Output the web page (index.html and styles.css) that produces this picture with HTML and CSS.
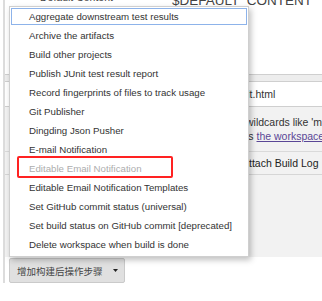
FILE: index.html
```html
<!DOCTYPE html>
<html lang="en">
<head>
    <meta charset="UTF-8">
    <title>Post-build Actions</title>
    <link rel="stylesheet" href="styles.css">
</head>
<body>

<div class="section">
    <div class="config">
        <div class="head-row">
            <span class="head-label">Default Content</span>
            <span class="head-value">$DEFAULT_CONTENT</span>
        </div>
        <div class="blank"></div>
        <div class="bar"></div>
        <div class="field-row">
            <span class="field-text">default.html</span>
        </div>
        <div class="panel">
            <div class="help">
                <div class="help-line">wildcards like 'module/dist/**/*.zip'</div>
                <div class="help-line">is <a href="#">the workspace</a>.</div>
            </div>
            <div class="check-row">Attach Build Log</div>
        </div>
    </div>

    <div class="actions">
        <button class="add-btn">增加构建后操作步骤 <svg class="caret" width="5" height="3" viewBox="0 0 5 3"><polygon points="0,0 5,0 2.5,3" fill="#222"/></svg></button>
    </div>

    <!-- dropdown menu of the add button, open over the form -->
    <ul class="menu">
        <li class="item focus">Aggregate downstream test results</li>
        <li class="item">Archive the artifacts</li>
        <li class="item">Build other projects</li>
        <li class="item">Publish JUnit test result report</li>
        <li class="item">Record fingerprints of files to track usage</li>
        <li class="item">Git Publisher</li>
        <li class="item">Dingding Json Pusher</li>
        <li class="item">E-mail Notification</li>
        <li class="item disabled">Editable Email Notification</li>
        <li class="item">Editable Email Notification Templates</li>
        <li class="item">Set GitHub commit status (universal)</li>
        <li class="item">Set build status on GitHub commit [deprecated]</li>
        <li class="item">Delete workspace when build is done</li>
    </ul>

    <div class="mark"></div>
</div>

</body>
</html>
```

FILE: styles.css
```css
body {
    margin: 0;
    background-color: white;
    font-family: "Liberation Sans", Arial, sans-serif;
    color: #333;
    width: 322px;
    height: 301px;
    overflow: hidden;
}

.section {
    position: relative;
    margin-left: 3px;
    border-left: 2px solid #dcdcdc;
    background-color: #f7f7f7;
}

.config {
    height: 257px;
    display: flex;
    flex-direction: column;
    background-color: white;
}

.head-row {
    height: 7px;
    overflow: hidden;
    display: flex;
    align-items: flex-start;
    white-space: nowrap;
}

.head-label {
    margin-left: 35px;
    margin-top: -9px;
    font-size: 10.5px;
    line-height: 12px;
    color: #444;
}

.head-value {
    margin-left: auto;
    margin-right: 10px;
    margin-top: -7px;
    font-size: 13.5px;
    line-height: 16px;
    color: #444;
}

.blank {
    height: 67px;
}

.bar {
    height: 6px;
    border-top: 1px solid #cfcfcf;
    border-bottom: 1px solid #cfcfcf;
    background-color: #ededed;
}

.field-row {
    height: 24px;
    border-bottom: 1px solid #cfcfcf;
    display: flex;
    align-items: center;
    font-size: 10.5px;
    padding-left: 216px;
    white-space: nowrap;
}

.panel {
    flex: 1;
    background-color: #f2f2f2;
    font-size: 10.5px;
    white-space: nowrap;
    overflow: hidden;
}

.help {
    padding-top: 8px;
    padding-bottom: 8px;
    border-bottom: 1px solid #dadada;
}

.help-line {
    line-height: 14px;
    padding-left: 241px;
}

.help-line a {
    color: #5a4796;
}

.check-row {
    height: 22px;
    line-height: 22px;
    padding-left: 237px;
    border-bottom: 1px solid #d6d6d6;
    color: #222;
}

.actions {
    background-color: white;
    padding: 1px 0 0 4px;
    height: 25px;
}

.add-btn {
    display: flex;
    align-items: center;
    height: 25px;
    margin: 0;
    padding: 0 6px 0 7px;
    border: 1px solid #cacaca;
    border-radius: 2px;
    background-color: #e0e0e0;
    color: #444;
    font-family: "Noto Sans CJK SC", sans-serif;
    font-size: 9.5px;
    gap: 10px;
}

.menu {
    position: absolute;
    top: 6px;
    left: 4px;
    width: 238px;
    margin: 0;
    padding: 0 0 2px 0;
    list-style: none;
    background-color: white;
    border: 1px solid #cfcfcf;
    box-shadow: 2px 3px 6px rgba(0, 0, 0, 0.25);
}

.item {
    height: 19px;
    line-height: 19px;
    padding-left: 19px;
    font-size: 9.7px;
    color: #333;
    white-space: nowrap;
}

.item.focus {
    outline: 1px solid #8db3ea;
    outline-offset: -2px;
}

.item.disabled {
    color: #adadad;
}

.mark {
    position: absolute;
    top: 156px;
    left: 12px;
    width: 152px;
    height: 18px;
    border: 2px solid #f22;
    border-radius: 2px;
}
```
